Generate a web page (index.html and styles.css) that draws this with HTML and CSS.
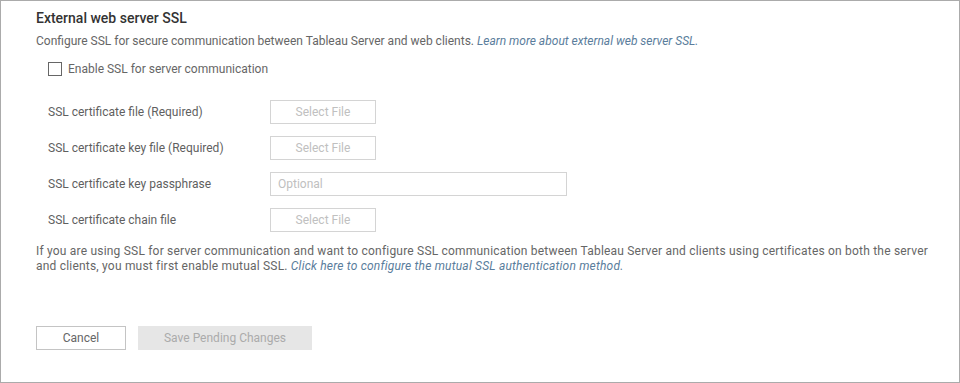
FILE: index.html
```html
<!DOCTYPE html>
<html>
<head>
<meta charset="utf-8">
<link rel="stylesheet" href="styles.css">
</head>
<body>
<div class="panel">
  <h2 class="title">External web server SSL</h2>
  <p class="desc">Configure SSL for secure communication between Tableau Server and web clients. <a class="link">Learn more about external web server SSL.</a></p>
  <label class="check-row"><span class="checkbox"></span><span>Enable SSL for server communication</span></label>
  <div class="rows">
    <div class="row"><span class="row-label">SSL certificate file (Required)</span><button class="file-btn">Select File</button></div>
    <div class="row"><span class="row-label">SSL certificate key file (Required)</span><button class="file-btn">Select File</button></div>
    <div class="row"><span class="row-label">SSL certificate key passphrase</span><div class="text-input">Optional</div></div>
    <div class="row"><span class="row-label">SSL certificate chain file</span><button class="file-btn">Select File</button></div>
  </div>
  <p class="note">If you are using SSL for server communication and want to configure SSL communication between Tableau Server and clients using certificates on both the server and clients, you must first enable mutual SSL. <a class="link">Click here to configure the mutual SSL authentication method.</a></p>
  <div class="actions">
    <button class="btn cancel">Cancel</button>
    <button class="btn save">Save Pending Changes</button>
  </div>
</div>
</body>
</html>
```
FILE: styles.css
```css
html, body {
  margin: 0;
  padding: 0;
  background: #fff;
}
body {
  font-family: Roboto, "Liberation Sans", sans-serif;
  color: #666;
}
.panel {
  box-sizing: border-box;
  width: 960px;
  height: 383px;
  border: 1px solid #ababab;
  padding: 8px 20px 0 35px;
  display: flex;
  flex-direction: column;
}
.title {
  margin: 0;
  font-size: 14px;
  font-weight: 500;
  line-height: 18px;
  color: #333;
}
.desc {
  margin: 6px 0 0;
  font-size: 12px;
  line-height: 16px;
  color: #666;
}
.link {
  font-style: italic;
  color: #5a7d9c;
}
.check-row {
  display: flex;
  align-items: center;
  gap: 6px;
  margin: 12px 0 0 12px;
  font-size: 12px;
  line-height: 16px;
  color: #666;
}
.checkbox {
  box-sizing: border-box;
  width: 14px;
  height: 14px;
  border: 1px solid #666;
  background: #fff;
}
.rows {
  margin: 23px 0 0 12px;
  display: flex;
  flex-direction: column;
  gap: 12px;
}
.row {
  display: flex;
  align-items: center;
  height: 24px;
}
.row-label {
  width: 222px;
  font-size: 12px;
  color: #5f5f5f;
}
.file-btn {
  box-sizing: border-box;
  width: 106px;
  height: 24px;
  border: 1px solid #d4d4d4;
  background: #fff;
  font-family: inherit;
  font-size: 12px;
  color: #c0c0c0;
  padding: 0;
}
.text-input {
  box-sizing: border-box;
  width: 297px;
  height: 24px;
  border: 1px solid #d4d4d4;
  padding: 0 7px;
  font-size: 12px;
  line-height: 22px;
  color: #c0c0c0;
}
.note {
  margin: 12px 0 0;
  max-width: 900px;
  font-size: 12px;
  line-height: 15px;
  letter-spacing: 0.2px;
  color: #666;
}
.actions {
  margin-top: 52px;
  display: flex;
  gap: 12px;
}
.btn {
  box-sizing: border-box;
  height: 24px;
  font-family: inherit;
  font-size: 12px;
  padding: 0;
}
.cancel {
  width: 90px;
  border: 1px solid #c4c4c4;
  background: #fff;
  color: #666;
}
.save {
  width: 174px;
  border: none;
  background: #e6e6e6;
  color: #ababab;
}
```
